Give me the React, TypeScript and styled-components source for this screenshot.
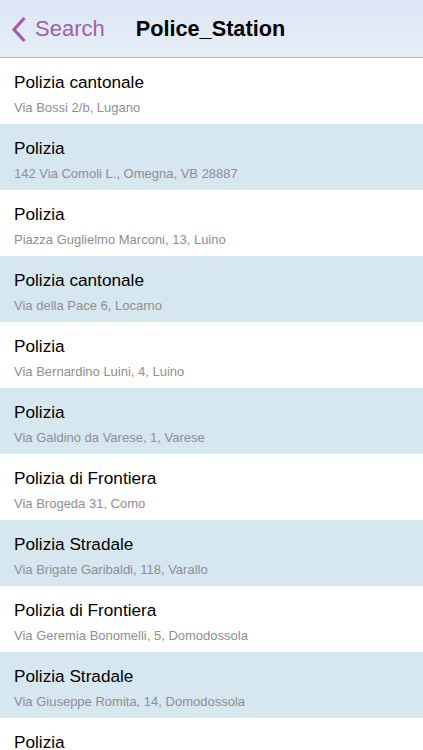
import styled, { createGlobalStyle } from "styled-components";

const GlobalStyle = createGlobalStyle`
  body {
    margin: 0;
    font-family: "Liberation Sans", Arial, sans-serif;
    background: #ffffff;
    overflow: hidden;
  }
`;

const Screen = styled.div`
  width: 423px;
  height: 750px;
  overflow: hidden;
  display: flex;
  flex-direction: column;
`;

const NavBar = styled.header`
  height: 57px;
  flex-shrink: 0;
  display: flex;
  align-items: center;
  background: linear-gradient(#dce7f5, #e6edf7);
  border-bottom: 1px solid #bfbcc6;
`;

const BackButton = styled.button`
  display: flex;
  align-items: center;
  gap: 9px;
  padding: 1px 0 0 11px;
  background: none;
  border: none;
  color: #a15fab;
  font-family: "Liberation Sans", Arial, sans-serif;
  font-size: 22px;
  cursor: pointer;
`;

const Title = styled.h1`
  margin: 0 0 0 31px;
  font-size: 21.7px;
  font-weight: bold;
  color: #000;
`;

const List = styled.ul`
  list-style: none;
  margin: 0;
  padding: 0;
`;

const Row = styled.li<{ $shaded: boolean }>`
  height: 66px;
  box-sizing: border-box;
  padding: 13px 14px 0;
  background: ${(p) => (p.$shaded ? "#d7e7f0" : "#ffffff")};
`;

const Name = styled.div`
  font-size: 17.2px;
  color: #000;
  line-height: 22px;
`;

const Address = styled.div`
  margin-top: 6px;
  font-size: 13px;
  color: #8e8e93;
  line-height: 17px;
`;

const stations = [
  ["Polizia cantonale", "Via Bossi 2/b, Lugano"],
  ["Polizia", "142 Via Comoli L., Omegna, VB 28887"],
  ["Polizia", "Piazza Guglielmo Marconi, 13, Luino"],
  ["Polizia cantonale", "Via della Pace 6, Locarno"],
  ["Polizia", "Via Bernardino Luini, 4, Luino"],
  ["Polizia", "Via Galdino da Varese, 1, Varese"],
  ["Polizia di Frontiera", "Via Brogeda 31, Como"],
  ["Polizia Stradale", "Via Brigate Garibaldi, 118, Varallo"],
  ["Polizia di Frontiera", "Via Geremia Bonomelli, 5, Domodossola"],
  ["Polizia Stradale", "Via Giuseppe Romita, 14, Domodossola"],
  ["Polizia", "Via Roma, Domodossola"],
];

export default function App() {
  return (
    <>
      <GlobalStyle />
      <Screen>
        <NavBar>
          <BackButton>
            <svg width="15" height="27" viewBox="0 0 15 27">
              <path d="M13.5 2 L3 13.5 L13.5 25" fill="none" stroke="#a15fab" strokeWidth="3.2" />
            </svg>
            Search
          </BackButton>
          <Title>Police_Station</Title>
        </NavBar>
        <List>
          {stations.map(([name, addr], i) => (
            <Row key={i} $shaded={i % 2 === 1}>
              <Name>{name}</Name>
              <Address>{addr}</Address>
            </Row>
          ))}
        </List>
      </Screen>
    </>
  );
}
